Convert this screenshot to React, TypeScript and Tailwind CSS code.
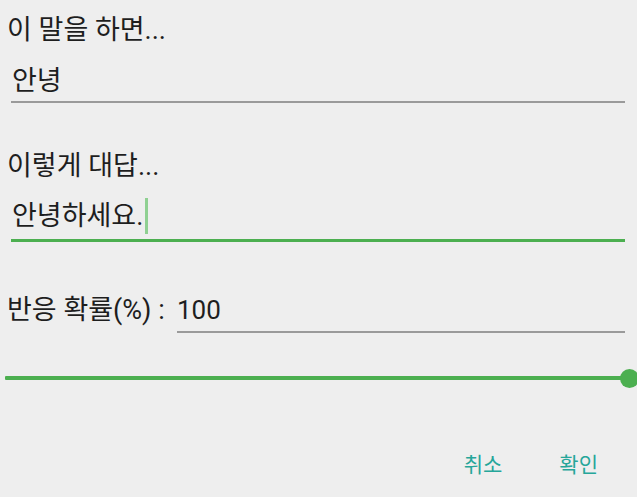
import { useState } from "react";

const font = "font-['Roboto','Noto_Sans_CJK_KR',sans-serif]";

export default function App() {
  const [trigger, setTrigger] = useState("안녕");
  const [reply] = useState("안녕하세요.");
  const [rate, setRate] = useState("100");

  return (
    <div className={`w-[637px] h-[497px] overflow-hidden bg-[#eeeeee] text-[#1e1e1e] ${font}`}>
      {/* 트리거 문장 */}
      <div className="pt-[14px] pl-[7px] h-[46px] text-[27px] leading-[32px]">이 말을 하면...</div>
      <div className="mt-[19px] ml-[11px] mr-[12px] pb-[4px] border-b-2 border-[#9a9a9a]">
        <input
          value={trigger}
          onChange={(e) => setTrigger(e.target.value)}
          className="w-full h-[32px] pl-[1px] bg-transparent outline-none text-[27px] leading-[32px]"
        />
      </div>

      {/* 대답 */}
      <div className="mt-[47px] pl-[7px] h-[32px] text-[27px] leading-[32px]">이렇게 대답...</div>
      <div className="mt-[18px] ml-[11px] mr-[12px] pb-[7px] border-b-[3px] border-[#4caf50]">
        <div className="flex items-center h-[32px] pl-[1px] text-[27px] leading-[32px]">
          <span>{reply}</span>
          <span className="ml-[2px] w-[3px] h-[36px] bg-[#8fd092]" />
        </div>
      </div>

      {/* 반응 확률 */}
      <div className="mt-[52px] flex items-start">
        <div className="pl-[7px] w-[177px] h-[32px] text-[27px] leading-[32px] shrink-0 whitespace-nowrap">반응 확률(%) :</div>
        <div className="flex-1 mr-[12px] pb-[5px] border-b-2 border-[#9a9a9a]">
          <input
            value={rate}
            onChange={(e) => setRate(e.target.value)}
            className="w-full h-[32px] bg-transparent outline-none text-[26px] leading-[32px]"
          />
        </div>
      </div>

      {/* 슬라이더 */}
      <div className="mt-[35px] ml-[5px] w-[625px] h-[20px] relative flex items-center">
        <div className="w-full h-[4px] bg-[#4caf50] rounded-[1px]" />
        <div className="absolute right-[-9px] top-[0.5px] w-[19px] h-[19px] rounded-full bg-[#4caf50]" />
      </div>

      {/* 버튼 */}
      <div className="mt-[65px] flex justify-end pr-[39px] gap-[57px] text-[21px] leading-[24px] text-[#26a69a]">
        <button className="outline-none">취소</button>
        <button className="outline-none">확인</button>
      </div>
    </div>
  );
}
